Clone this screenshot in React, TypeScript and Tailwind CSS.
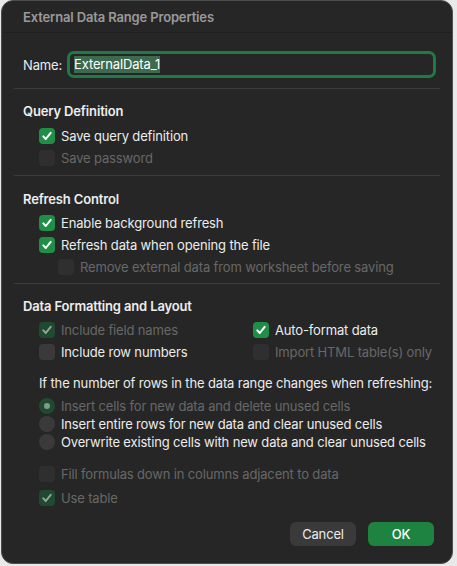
import React from 'react';

const font = { fontFamily: 'Inter, "Open Sans", sans-serif', letterSpacing: '-0.15px' };

function Check({ checked, disabled }: { checked?: boolean; disabled?: boolean }) {
    const box = checked
        ? disabled
            ? 'bg-[#1f4a31]'
            : 'bg-[#1f8f48]'
        : disabled
            ? 'bg-[#2f2f2f]'
            : 'bg-[#3a3a3a]';
    return (
        <span className={`w-4 h-4 rounded-[4px] flex items-center justify-center shrink-0 ${box}`}>
            {checked && (
                <svg width="12" height="12" viewBox="0 0 12 12">
                    <path
                        d="M2.3 6.4 L4.8 9 L9.7 2.8"
                        fill="none"
                        stroke={disabled ? '#8fa697' : '#ffffff'}
                        strokeWidth="2"
                        strokeLinecap="round"
                        strokeLinejoin="round"
                    />
                </svg>
            )}
        </span>
    );
}

function Radio({ selected, disabled }: { selected?: boolean; disabled?: boolean }) {
    return (
        <span
            className={`w-4 h-4 rounded-full flex items-center justify-center shrink-0 ${
                selected ? 'bg-[#1f4a31]' : disabled ? 'bg-[#2f2f2f]' : 'bg-[#3a3a3a]'
            }`}
        >
            {selected && <span className="w-[6px] h-[6px] rounded-full bg-[#7f9c88]" />}
        </span>
    );
}

function Row({
    label,
    checked,
    disabled,
    className = '',
}: {
    label: string;
    checked?: boolean;
    disabled?: boolean;
    className?: string;
}) {
    return (
        <div className={`flex items-center gap-[6px] h-[22px] whitespace-nowrap ${className}`}>
            <Check checked={checked} disabled={disabled} />
            <span className={disabled ? 'text-[#686868]' : 'text-[#ececec]'}>{label}</span>
        </div>
    );
}

function RadioRow({ label, selected, disabled }: { label: string; selected?: boolean; disabled?: boolean }) {
    return (
        <div className="flex items-center gap-[6px] h-[18px] whitespace-nowrap">
            <Radio selected={selected} disabled={disabled} />
            <span className={disabled ? 'text-[#686868]' : 'text-[#ececec]'}>{label}</span>
        </div>
    );
}

export default function App() {
    return (
        <div className="w-[457px] h-[566px] bg-[#e9e9e9] overflow-hidden" style={font}>
            <div className="ml-px w-[452px] h-[564px] bg-[#262626] rounded-[12px] border border-[#4d4d4d] flex flex-col text-[13px] leading-[20px] text-[#ececec]">
                <div className="h-[32px] px-[21px] pt-[6px] border-b border-[#1f1f1f] font-semibold text-[#9a9a9a]">
                    External Data Range Properties
                </div>

                <div className="flex items-center gap-[5px] pl-[21px] pr-[16px] pt-[18px] pb-[10px]">
                    <span>Name:</span>
                    <div className="flex-1 h-[27px] rounded-[7px] border-[3px] border-[#1f7a45] flex items-center px-[4px]">
                        <span className="bg-[#3d6a4e] text-white leading-[17px]">ExternalData_1</span>
                    </div>
                </div>

                <div className="mx-[12px] border-t border-[#3c3c3c]" />

                <div className="pl-[21px] pt-[12px] pb-[6px]">
                    <div className="font-semibold text-[#ededed]">Query Definition</div>
                    <div className="pl-[16px] mt-[4px]">
                        <Row label="Save query definition" checked />
                        <Row label="Save password" disabled />
                    </div>
                </div>

                <div className="mx-[12px] border-t border-[#3c3c3c]" />

                <div className="pl-[21px] pt-[13px] pb-[5px]">
                    <div className="font-semibold text-[#ededed]">Refresh Control</div>
                    <div className="pl-[16px] mt-[3px]">
                        <Row label="Enable background refresh" checked />
                        <Row label="Refresh data when opening the file" checked />
                        <Row label="Remove external data from worksheet before saving" disabled className="pl-[19px]" />
                    </div>
                </div>

                <div className="mx-[12px] border-t border-[#3c3c3c]" />

                <div className="pl-[21px] pr-[10px] pt-[12px]">
                    <div className="font-semibold text-[#ededed]">Data Formatting and Layout</div>
                    <div className="pl-[16px] mt-[3px] grid grid-cols-[214px_1fr]">
                        <Row label="Include field names" checked disabled />
                        <Row label="Auto-format data" checked />
                        <Row label="Include row numbers" />
                        <Row label="Import HTML table(s) only" disabled />
                    </div>
                    <div className="pl-[16px] mt-[9px] h-[22px] flex items-center whitespace-nowrap">
                        If the number of rows in the data range changes when refreshing:
                    </div>
                    <div className="pl-[16px] mt-[3px]">
                        <RadioRow label="Insert cells for new data and delete unused cells" selected disabled />
                        <RadioRow label="Insert entire rows for new data and clear unused cells" />
                        <RadioRow label="Overwrite existing cells with new data and clear unused cells" />
                    </div>
                    <div className="pl-[16px] mt-[12px] flex flex-col gap-[2px]">
                        <Row label="Fill formulas down in columns adjacent to data" disabled />
                        <Row label="Use table" checked disabled />
                    </div>
                </div>

                <div className="flex justify-end gap-[12px] pr-[18px] mt-[13px]">
                    <button className="w-[66px] h-[24px] rounded-[6px] bg-[#3a3a3a] text-[#ececec] text-[13px]">
                        Cancel
                    </button>
                    <button className="w-[66px] h-[24px] rounded-[6px] bg-[#1e8340] text-white text-[13px] font-medium">
                        OK
                    </button>
                </div>
            </div>
        </div>
    );
}
